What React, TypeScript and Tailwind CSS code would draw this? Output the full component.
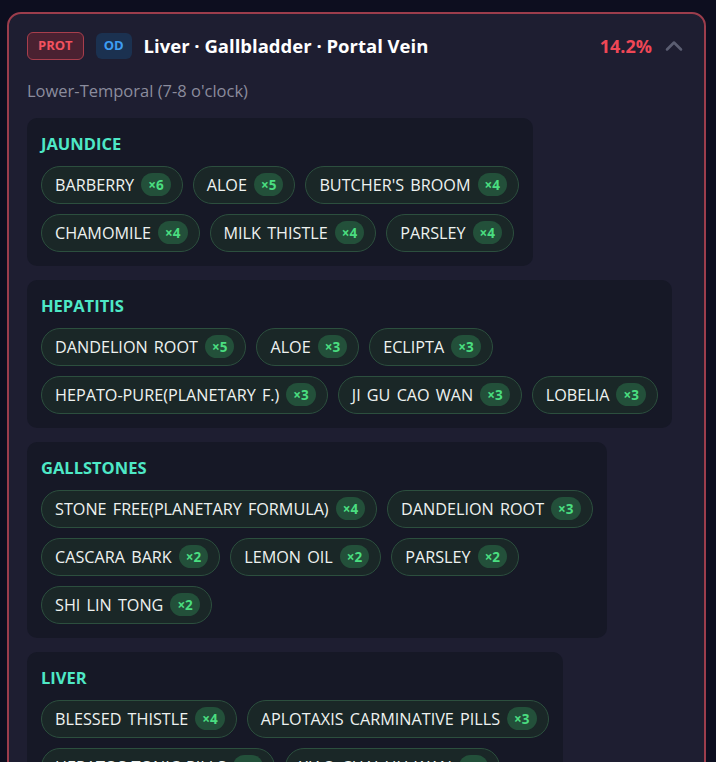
import { ChevronUp } from "lucide-react";

type Herb = { name: string; count: number };
type Group = { title: string; rows: Herb[][] };

const groups: Group[] = [
  {
    title: "JAUNDICE",
    rows: [
      [
        { name: "BARBERRY", count: 6 },
        { name: "ALOE", count: 5 },
        { name: "BUTCHER'S BROOM", count: 4 },
      ],
      [
        { name: "CHAMOMILE", count: 4 },
        { name: "MILK THISTLE", count: 4 },
        { name: "PARSLEY", count: 4 },
      ],
    ],
  },
  {
    title: "HEPATITIS",
    rows: [
      [
        { name: "DANDELION ROOT", count: 5 },
        { name: "ALOE", count: 3 },
        { name: "ECLIPTA", count: 3 },
      ],
      [
        { name: "HEPATO-PURE(PLANETARY F.)", count: 3 },
        { name: "JI GU CAO WAN", count: 3 },
        { name: "LOBELIA", count: 3 },
      ],
    ],
  },
  {
    title: "GALLSTONES",
    rows: [
      [
        { name: "STONE FREE(PLANETARY FORMULA)", count: 4 },
        { name: "DANDELION ROOT", count: 3 },
      ],
      [
        { name: "CASCARA BARK", count: 2 },
        { name: "LEMON OIL", count: 2 },
        { name: "PARSLEY", count: 2 },
      ],
      [{ name: "SHI LIN TONG", count: 2 }],
    ],
  },
  {
    title: "LIVER",
    rows: [
      [
        { name: "BLESSED THISTLE", count: 4 },
        { name: "APLOTAXIS CARMINATIVE PILLS", count: 3 },
      ],
      [
        { name: "HEPATOS-TONIC PILLS", count: 3 },
        { name: "XIAO CHAI HU WAN", count: 3 },
      ],
    ],
  },
];

function HerbChip({ herb }: { herb: Herb }) {
  return (
    <span className="flex h-[38px] items-center gap-[7px] rounded-full border border-[#2c4f3e] bg-[#1a2727] pl-[13px] pr-[11px] text-[16.2px] text-[#eef2f0] [word-spacing:2px]">
      {herb.name}
      <span className="flex h-[23px] items-center rounded-full bg-[#23503a] px-[7px] text-[13.5px] font-bold text-[#4ade80]">
        ×{herb.count}
      </span>
    </span>
  );
}

function GroupCard({ group }: { group: Group }) {
  return (
    <section className="w-fit rounded-[10px] bg-[#161826] px-[14px] pb-[14px] pt-[16px]">
      <h3 className="text-[16.5px] font-bold leading-5 text-[#4ee8c6]">{group.title}</h3>
      <div className="mt-[12px] flex flex-col gap-[10px]">
        {group.rows.map((row, i) => (
          <div key={i} className="flex gap-[10px]">
            {row.map((herb) => (
              <HerbChip key={herb.name} herb={herb} />
            ))}
          </div>
        ))}
      </div>
    </section>
  );
}

export default function App() {
  return (
    <div className="h-[762px] overflow-hidden bg-[#0d0e1f] pl-[7px] pr-[10px] pt-[12px] font-['Open_Sans',sans-serif]">
      <div className="rounded-[14px] border-2 border-[#9c3d4c] bg-[#1e1e31] px-[18px] pt-[18px] pb-6">
        <header className="flex items-center gap-3">
          <span className="flex h-[28px] items-center rounded-md border border-[#a83e4c] bg-[#4a2131] px-[10px] text-[13px] font-bold text-[#f2525f]">
            PROT
          </span>
          <span className="flex h-[26px] items-center rounded-md bg-[#1b3150] px-[8px] text-[13px] font-bold text-[#3d9df2]">
            OD
          </span>
          <h2 className="text-[18.5px] font-bold text-white">Liver · Gallbladder · Portal Vein</h2>
          <span className="ml-auto text-[18px] font-bold text-[#ef4756]">14.2%</span>
          <ChevronUp className="-ml-[4px] -mr-[2px] h-[28px] w-[28px] text-[#5b5e72]" strokeWidth={2.2} />
        </header>
        <p className="mt-[19px] text-[16.5px] text-[#8b8c9d]">Lower-Temporal (7-8 o'clock)</p>
        <div className="mt-[14px] flex flex-col gap-[14px]">
          {groups.map((g) => (
            <GroupCard key={g.title} group={g} />
          ))}
        </div>
      </div>
    </div>
  );
}
